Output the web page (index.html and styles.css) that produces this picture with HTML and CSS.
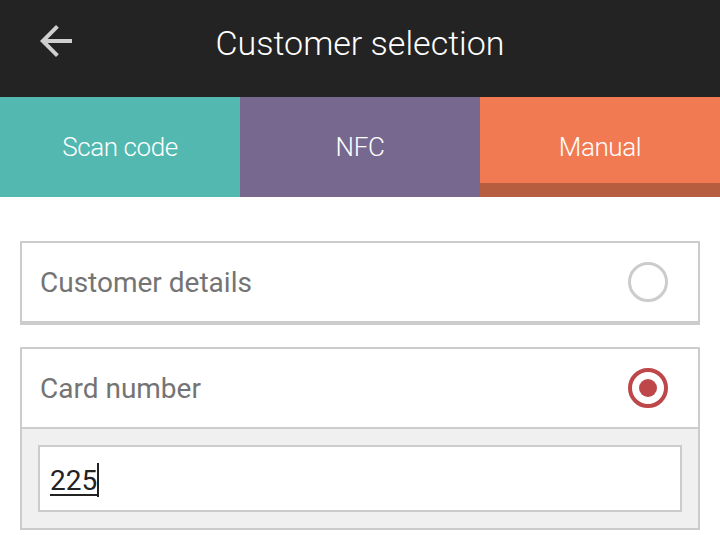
FILE: index.html
```html
<!DOCTYPE html>
<html>
<head>
<meta charset="utf-8">
<link rel="stylesheet" href="styles.css">
</head>
<body>
<div class="app">
  <header class="topbar">
    <svg class="back" viewBox="0 0 24 24" width="48" height="48"><path d="M20 11H7.83l5.59-5.59L12 4l-8 8 8 8 1.41-1.41L7.83 13H20v-2z" fill="#cfcfcf"/></svg>
    <h1 class="title">Customer selection</h1>
  </header>
  <nav class="tabs">
    <div class="tab tab-scan">Scan code</div>
    <div class="tab tab-nfc">NFC</div>
    <div class="tab tab-manual active">Manual</div>
  </nav>
  <main class="content">
    <section class="card">
      <div class="row">
        <span class="label">Customer details</span>
        <span class="radio"></span>
      </div>
    </section>
    <section class="card card-open">
      <div class="row">
        <span class="label">Card number</span>
        <span class="radio checked"></span>
      </div>
      <div class="panel">
        <div class="input"><span class="value">225</span><span class="caret"></span></div>
      </div>
    </section>
  </main>
</div>
</body>
</html>
```
FILE: styles.css
```css
html, body {
  margin: 0;
  padding: 0;
  background: #ffffff;
}
.app {
  width: 720px;
  height: 535px;
  overflow: hidden;
  font-family: Roboto, "Noto Sans", "Liberation Sans", sans-serif;
}
.topbar {
  height: 97px;
  background: #232323;
  display: flex;
  align-items: center;
  justify-content: center;
  position: relative;
}
.back {
  position: absolute;
  left: 32px;
  top: 17px;
}
.title {
  margin: 0;
  color: #ffffff;
  font-weight: 300;
  font-size: 34px;
  padding-bottom: 12px;
}
.tabs {
  display: grid;
  grid-template-columns: 240px 240px 240px;
  height: 100px;
}
.tab {
  display: flex;
  align-items: center;
  justify-content: center;
  color: #ffffff;
  font-weight: 300;
  font-size: 26px;
  letter-spacing: -0.4px;
}
.tab-scan { background: #52b8b0; }
.tab-nfc { background: #77688f; }
.tab-manual { background: #f27a52; }
.tab.active { box-shadow: inset 0 -14px 0 #b65c3f; }
.content {
  padding: 44px 20px 0;
  display: flex;
  flex-direction: column;
  gap: 22px;
}
.card {
  border: 2px solid #cccccc;
  border-bottom-width: 4px;
  background: #ffffff;
}
.card-open {
  border-bottom-width: 2px;
}
.row {
  height: 78px;
  display: flex;
  align-items: center;
  justify-content: space-between;
  padding: 0 30px 0 18px;
}
.card-open .row {
  height: 78px;
  border-bottom: 2px solid #cccccc;
}
.label {
  color: #747474;
  font-size: 28px;
}
.radio {
  width: 34px;
  height: 34px;
  border: 3px solid #cccccc;
  border-radius: 50%;
  box-sizing: content-box;
  position: relative;
}
.radio.checked {
  width: 32px;
  height: 32px;
  border: 4px solid #be4749;
}
.radio.checked::after {
  content: "";
  position: absolute;
  left: 7px;
  top: 7px;
  width: 18px;
  height: 18px;
  border-radius: 50%;
  background: #be4749;
}
.panel {
  background: #f0f0f0;
  padding: 16px;
}
.input {
  height: 63px;
  background: #ffffff;
  border: 2px solid #cccccc;
  display: flex;
  align-items: center;
  padding-left: 10px;
}
.value {
  color: #222222;
  font-size: 28px;
  padding-top: 3px;
  text-decoration: underline;
  text-underline-offset: 4px;
}
.caret {
  width: 2px;
  height: 34px;
  margin-top: 3px;
  background: #222222;
}
```
